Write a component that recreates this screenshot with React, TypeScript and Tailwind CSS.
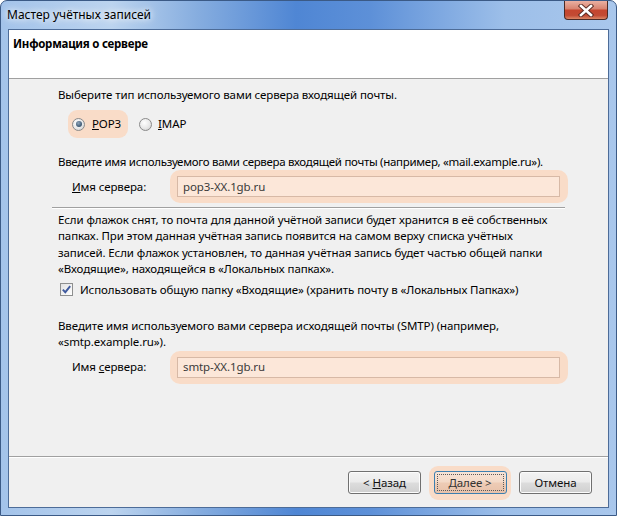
import React from "react";

const Radio = ({ checked }: { checked?: boolean }) => (
  <span className="w-[13px] h-[13px] rounded-full border border-[#8a8a8a] bg-[radial-gradient(circle_at_40%_35%,#ffffff_0%,#e8e8e8_55%,#c9c9c9_100%)] flex items-center justify-center shrink-0">
    {checked && (
      <span className="w-[6px] h-[6px] rounded-full bg-[radial-gradient(circle_at_40%_35%,#8fa6bb_0%,#46627c_60%,#2c4257_100%)]" />
    )}
  </span>
);

const Checkbox = () => (
  <span className="w-[13px] h-[13px] border border-[#8e8f8f] bg-[linear-gradient(135deg,#e2e2e2_0%,#ffffff_100%)] flex items-center justify-center shrink-0">
    <svg width="11" height="11" viewBox="0 0 11 11">
      <path d="M1.8 5.6 L4.3 8.2 L9.2 2.2" fill="none" stroke="#3f5a9e" strokeWidth="1.9" />
    </svg>
  </span>
);

const Separator = () => (
  <div className="ml-[-6px] w-[513px] h-[2px] border-t border-[#a0a0a0] border-b border-b-white" />
);

const ServerRow = ({ label, value }: { label: React.ReactNode; value: string }) => (
  <div className="flex items-center h-[33px]">
    <div className="w-[112px] pl-[14px] whitespace-nowrap">{label}</div>
    <div className="w-[398px] h-[33px] rounded-[10px] bg-[#f9dcc8] pl-[7px] flex items-center">
      <div className="w-[383px] h-[21px] border border-[#d7b9a6] bg-[#fce7d9] pl-[5px] flex items-center text-[#3a3a3a] whitespace-nowrap">
        {value}
      </div>
    </div>
  </div>
);

const Btn = ({ children }: { children: React.ReactNode }) => (
  <button className="w-[73px] h-[23px] rounded-[3px] border border-[#707070] bg-[linear-gradient(180deg,#f3f3f3_0%,#ebebeb_48%,#dddddd_52%,#cfcfcf_100%)] shadow-[inset_0_0_0_1px_#fcfcfc] text-[#111] flex items-center justify-center">
    {children}
  </button>
);

export default function App() {
  return (
    <div className="w-[617px] h-[516px] flex flex-col border border-[#3b5a86] rounded-t-[7px] bg-[linear-gradient(90deg,#a3c3ea_0%,#bcd4ef_18%,#86addf_32%,#4f86d4_48%,#5d90d8_60%,#9dbfe9_82%,#a9c7ec_100%)] font-['Segoe_UI','Noto_Sans',sans-serif] text-[11.5px] tracking-[-0.1px] text-black leading-[16px]">
      {/* Title bar */}
      <div className="h-[28px] flex items-start justify-between shrink-0">
        <div className="pl-[6px] pt-[6px] [text-shadow:0_0_6px_#ffffff,0_0_10px_#ffffff] text-[12px] tracking-normal whitespace-nowrap">
          Мастер учётных записей
        </div>
        <div className="mr-[8px] w-[44px] h-[19px] rounded-b-[4px] border border-t-0 border-[#4a2a26] bg-[linear-gradient(180deg,#eab0a2_0%,#d88572_42%,#c5462f_52%,#c24a33_80%,#dc8766_100%)] flex items-center justify-center">
          <svg width="16" height="13" viewBox="0 0 16 13">
            <path d="M3 2 L13 11 M13 2 L3 11" stroke="#5a2a22" strokeWidth="4.4" strokeLinecap="square" />
            <path d="M3 2 L13 11 M13 2 L3 11" stroke="#ffffff" strokeWidth="2.6" strokeLinecap="square" />
          </svg>
        </div>
      </div>

      {/* Client area */}
      <div className="flex-1 mx-[7px] mb-[7px] border border-[#4d6c98] flex flex-col bg-[#f0f0f0]">
        {/* Header */}
        <div className="h-[49px] bg-white border-b border-[#a0a0a0] pl-[4px] pt-[6px] font-bold text-[11.5px] tracking-[-0.25px] shrink-0">
          Информация о сервере
        </div>

        {/* Content */}
        <div className="flex-1 flex flex-col pl-[49px] pt-[8px]">
          <div className="h-[16px] whitespace-nowrap">Выберите тип используемого вами сервера входящей почты.</div>

          <div className="mt-[7px] h-[28px] flex items-center ml-[10px]">
            <div className="h-[28px] w-[60px] rounded-[9px] bg-[#f9dcc8] pl-[4px] flex items-center gap-[7px]">
              <Radio checked />
              <span>
                <u>P</u>OP3
              </span>
            </div>
            <div className="ml-[11px] flex items-center gap-[6px]">
              <Radio />
              <span>
                <u>I</u>MAP
              </span>
            </div>
          </div>

          <div className="mt-[16px] h-[16px] whitespace-nowrap tracking-[-0.3px]">
            Введите имя используемого вами сервера входящей почты (например, «mail.example.ru»).
          </div>

          <ServerRow
            label={
              <>
                <u>И</u>мя сервера:
              </>
            }
            value="pop3-XX.1gb.ru"
          />

          <div className="mt-[4px]">
            <Separator />
          </div>

          <div className="mt-[3px] leading-[16.4px] whitespace-nowrap">
            Если флажок снят, то почта для данной учётной записи будет хранится в её собственных
            <br />
            папках. При этом данная учётная запись появится на самом верху списка учётных
            <br />
            записей. Если флажок установлен, то данная учётная запись будет частью общей папки
            <br />
            «Входящие», находящейся в «Локальных папках».
          </div>

          <div className="mt-[4px] h-[16px] ml-[2px] flex items-center gap-[7px] whitespace-nowrap">
            <Checkbox />
            <span>Использовать общую папку «Входящие» (хранить почту в «Локальных Папках»)</span>
          </div>

          <div className="mt-[20px] leading-[16.5px] whitespace-nowrap">
            Введите имя используемого вами сервера исходящей почты (SMTP) (например,
            <br />
            «smtp.example.ru»).
          </div>

          <ServerRow
            label={
              <>
                Имя <u>с</u>ервера:
              </>
            }
            value="smtp-XX.1gb.ru"
          />
        </div>

        <div className="h-[2px] border-t border-[#a0a0a0] border-b border-b-white shrink-0" />

        {/* Buttons */}
        <div className="h-[49px] flex items-center justify-end pr-[16px] shrink-0">
          <Btn>
            &lt;&nbsp;<u>Н</u>азад
          </Btn>
          <div className="mx-[8px] w-[82px] h-[34px] rounded-[9px] bg-[#f9dcc8] flex items-center justify-center">
            <button className="w-[73px] h-[23px] rounded-[3px] border border-[#3c7fb1] bg-[linear-gradient(180deg,#f7e3d6_0%,#f3d9c7_48%,#edcbb5_52%,#e8c2aa_100%)] p-[2px] flex">
              <span className="flex-1 border border-dotted border-[#5a5a5a] flex items-center justify-center text-[#333]">
                <u>Д</u>алее&nbsp;&gt;
              </span>
            </button>
          </div>
          <Btn>Отмена</Btn>
        </div>
      </div>
    </div>
  );
}
